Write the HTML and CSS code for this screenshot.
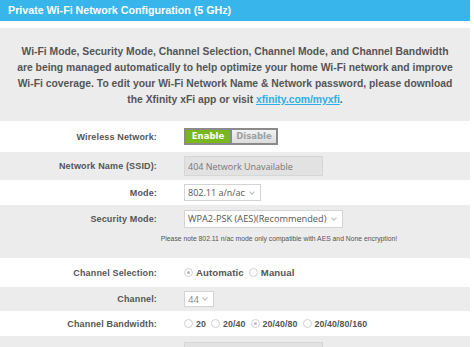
FILE: index.html
```html
<!DOCTYPE html>
<html lang="en">
<head>
    <meta charset="UTF-8">
    <title>Private Wi-Fi Network Configuration (5 GHz)</title>
    <link rel="stylesheet" href="styles.css">
</head>
<body>
    <div class="page">
        <h2 class="title">Private Wi-Fi Network Configuration (5 GHz)</h2>

        <div class="intro">
            Wi-Fi Mode, Security Mode, Channel Selection, Channel Mode, and Channel Bandwidth<br>
            are being managed automatically to help optimize your home Wi-Fi network and improve<br>
            Wi-Fi coverage. To edit your Wi-Fi Network Name &amp; Network password, please download<br>
            the Xfinity xFi app or visit <a href="#">xfinity.com/myxfi</a>.
        </div>

        <div class="form">
            <div class="row row-wireless">
                <label class="label">Wireless Network:</label>
                <div class="switch">
                    <span class="switch-on">Enable</span>
                    <span class="switch-off">Disable</span>
                </div>
            </div>

            <div class="row odd row-ssid">
                <label class="label">Network Name (SSID):</label>
                <input class="text-input" type="text" value="404 Network Unavailable" disabled>
            </div>

            <div class="row row-mode">
                <label class="label">Mode:</label>
                <div class="select">802.11 a/n/ac <span class="caret"></span></div>
            </div>

            <div class="row-group odd">
                <div class="row row-security">
                    <label class="label">Security Mode:</label>
                    <div class="select">WPA2-PSK (AES)(Recommended) <span class="caret"></span></div>
                </div>
                <p class="note">Please note 802.11 n/ac mode only compatible with AES and None encryption!</p>
            </div>

            <div class="row row-chsel">
                <label class="label">Channel Selection:</label>
                <div class="radios">
                    <span class="radio checked"></span><span class="radio-text">Automatic</span>
                    <span class="radio"></span><span class="radio-text">Manual</span>
                </div>
            </div>

            <div class="row odd row-channel">
                <label class="label">Channel:</label>
                <div class="select small">44 <span class="caret"></span></div>
            </div>

            <div class="row row-bw">
                <label class="label">Channel Bandwidth:</label>
                <div class="radios numbers">
                    <span class="radio"></span><span class="radio-text">20</span>
                    <span class="radio"></span><span class="radio-text">20/40</span>
                    <span class="radio checked"></span><span class="radio-text">20/40/80</span>
                    <span class="radio"></span><span class="radio-text">20/40/80/160</span>
                </div>
            </div>

            <div class="row odd row-last">
                <label class="label"></label>
                <div class="text-input blank"></div>
            </div>
        </div>
    </div>
</body>
</html>
```

FILE: styles.css
```css
* {
    margin: 0;
    padding: 0;
    box-sizing: border-box;
}

body {
    background: #fff;
    font-family: 'Liberation Sans', Arial, sans-serif;
    overflow: hidden;
}

.page {
    width: 470px;
}

.title {
    height: 21px;
    line-height: 21px;
    padding-left: 8px;
    background: #38b5ea;
    color: #fff;
    font-size: 10.7px;
    font-weight: bold;
}

.intro {
    margin-top: 7px;
    height: 93px;
    padding: 16px 0 0;
    background: #ececec;
    color: #555;
    font-size: 10.35px;
    font-weight: bold;
    line-height: 16px;
    text-align: center;
    white-space: nowrap;
}

.intro a {
    color: #2eaee6;
}

.row {
    display: flex;
    align-items: center;
    gap: 27px;
}

.odd {
    background: #ececec;
}

.label {
    width: 157px;
    flex-shrink: 0;
    text-align: right;
    color: #555;
    font-size: 9px;
    font-weight: bold;
    letter-spacing: 0.15px;
}

.row-wireless { height: 31px; }
.row-ssid { height: 28px; }
.row-mode { height: 25px; }
.row-security { height: 26px; padding-top: 1px; }
.row-chsel { height: 29px; }
.row-channel { height: 24px; }
.row-bw { height: 25px; }
.row-last { height: 20px; align-items: flex-end; }

.row-group {
    height: 53px;
}

.note {
    padding-left: 160px;
    width: 398px;
    text-align: center;
    color: #555;
    font-size: 6.8px;
    line-height: 12px;
    margin-top: 2px;
    white-space: nowrap;
}

/* enable / disable toggle */
.switch {
    display: flex;
    padding: 2px;
    background: #8a8a8a;
    gap: 2px;
    font-family: 'DejaVu Sans', Verdana, sans-serif;
    font-size: 8.5px;
    font-weight: bold;
}

.switch span {
    width: 44px;
    height: 13px;
    line-height: 13px;
    text-align: center;
}

.switch-on {
    background: #79b71e;
    color: #fff;
}

.switch-off {
    background: linear-gradient(#f2f2f2, #dcdcdc);
    color: #a0a0a0;
}

.text-input {
    width: 139px;
    height: 20px;
    padding: 0 3px;
    border: 1px solid #d6d6d6;
    background: #e2e2e2;
    color: #777;
    font-family: 'Open Sans', sans-serif;
    font-size: 9px;
}

.text-input.blank {
    height: 14px;
    border-bottom: none;
}

.select {
    display: flex;
    align-items: center;
    height: 18px;
    padding: 0 6px 0 3px;
    border: 1px solid #d4d4d4;
    background: #fff;
    color: #555;
    font-family: 'Open Sans', sans-serif;
    font-size: 9.2px;
    white-space: pre;
}

.row-mode .select {
    width: 77px;
    height: 17px;
    font-size: 9px;
}

.row-security .select {
    width: 159px;
}

.select.small {
    width: 30px;
    height: 16px;
    color: #888;
    font-size: 9.5px;
}

.caret {
    margin-left: auto;
    width: 4px;
    height: 4px;
    border-right: 1px solid #bbb;
    border-bottom: 1px solid #bbb;
    transform: translateY(-1px) rotate(45deg);
}

/* radio groups */
.radios {
    display: flex;
    align-items: center;
    color: #555;
    font-size: 9.6px;
    font-weight: bold;
    letter-spacing: 0.1px;
}

.radios.numbers {
    font-size: 8.8px;
}

.radio {
    width: 9px;
    height: 9px;
    margin: 0 3px 0 0;
    border: 1px solid #d0d0d0;
    border-radius: 50%;
    background: #fff;
    position: relative;
}

.radio.checked::after {
    content: '';
    position: absolute;
    top: 2px;
    left: 2px;
    width: 3px;
    height: 3px;
    border-radius: 50%;
    background: #bbb;
}

.radio-text {
    margin-right: 5px;
}
```
